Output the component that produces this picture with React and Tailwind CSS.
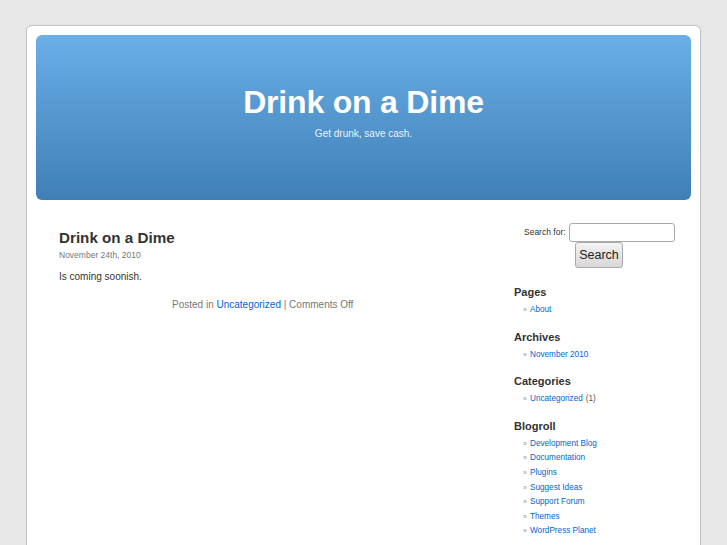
import React from "react";

const Bullet = ({ children, extra }) => (
  <li className="h-[14.6px] leading-[14.6px] whitespace-nowrap">
    <span className="inline-block w-[7px] text-[7px] text-[#999]">»</span>
    <a href="#" className="text-[#0066cc]">{children}</a>
    {extra && <span className="ml-[3px] text-[#555]">{extra}</span>}
  </li>
);

const Widget = ({ title, children }) => (
  <div className="mb-[12px]">
    <h2 className="text-[11px] font-bold text-[#333] leading-[14px]">{title}</h2>
    <ul className="mt-[4px] pl-[9px] text-[8.2px]">{children}</ul>
  </div>
);

export default function App() {
  return (
    <div
      className="h-[545px] bg-[#e7e7e7] pt-[25px] pl-[26px] overflow-hidden"
      style={{ fontFamily: '"Liberation Sans", Arial, sans-serif' }}
    >
      <div className="w-[675px] h-[540px] bg-white border border-[#c4c4c4] rounded-[6px] p-[9px] shadow-[0_0_1px_rgba(0,0,0,0.1)]">
        {/* Header */}
        <div className="h-[165px] rounded-[6px] bg-gradient-to-b from-[#6aafe8] to-[#3f7fb6] flex flex-col items-center pt-[49px]">
          <h1 className="text-[32px] font-bold text-white leading-[36px] tracking-[-0.2px]">Drink on a Dime</h1>
          <p className="mt-[6px] text-[10px] text-[#e8f2fb]">Get drunk, save cash.</p>
        </div>

        <div className="flex">
          {/* Content */}
          <div className="w-[455px] pl-[23px] pt-[29px]">
            <h2 className="text-[15.2px] font-bold text-[#333] leading-[18px]">Drink on a Dime</h2>
            <p className="mt-[2px] text-[8.5px] text-[#777]">November 24th, 2010</p>
            <p className="mt-[7px] text-[10px] text-[#333]">Is coming soonish.</p>
            <p className="mt-[13px] pl-[113px] text-[10px] text-[#777]">
              Posted in <a href="#" className="text-[#0066cc]">Uncategorized</a> | Comments Off
            </p>
          </div>

          {/* Sidebar */}
          <div className="pl-[23px] pt-[23px] flex-1">
            <div className="flex flex-col items-start pl-[10px]">
              <div className="flex items-center">
                <span className="text-[8.5px] text-[#333] mr-[3px]">Search for:</span>
                <input className="w-[106px] h-[19px] border border-[#aaa] rounded-[3px] bg-white outline-none" />
              </div>
              <button className="ml-[51px] w-[48px] h-[26px] border border-[#aaa] rounded-[3px] bg-gradient-to-b from-[#f3f3f3] to-[#d8d8d8] text-[12.5px] text-[#222]">
                Search
              </button>
            </div>

            <div className="mt-[17px]">
              <Widget title="Pages">
                <Bullet>About</Bullet>
              </Widget>
              <Widget title="Archives">
                <Bullet>November 2010</Bullet>
              </Widget>
              <Widget title="Categories">
                <Bullet extra="(1)">Uncategorized</Bullet>
              </Widget>
              <Widget title="Blogroll">
                <Bullet>Development Blog</Bullet>
                <Bullet>Documentation</Bullet>
                <Bullet>Plugins</Bullet>
                <Bullet>Suggest Ideas</Bullet>
                <Bullet>Support Forum</Bullet>
                <Bullet>Themes</Bullet>
                <Bullet>WordPress Planet</Bullet>
              </Widget>
            </div>
          </div>
        </div>
      </div>
    </div>
  );
}
